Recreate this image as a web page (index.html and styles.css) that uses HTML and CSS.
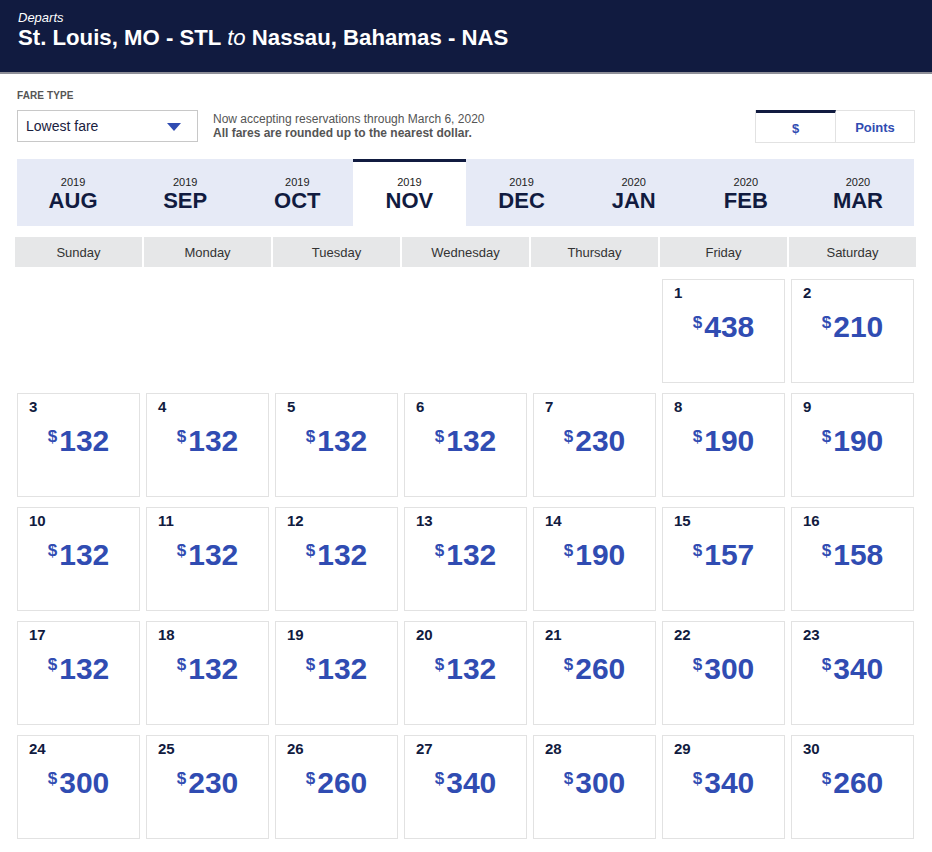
FILE: index.html
```html
<!DOCTYPE html>
<html>
<head>
<meta charset="utf-8">
<link rel="stylesheet" href="styles.css">
</head>
<body>
<header class="hero">
  <div class="departs">Departs</div>
  <h1 class="route">St. Louis, MO - STL <span class="to">to</span> Nassau, Bahamas - NAS</h1>
</header>

<section class="controls">
  <div class="label">FARE TYPE</div>
  <div class="control-row">
    <div class="select">
      <span>Lowest fare</span>
      <svg class="caret" width="14" height="8" viewBox="0 0 14 8"><path d="M0 0 H14 L7 8 Z" fill="#304cb2"/></svg>
    </div>
    <div class="note">
      <div>Now accepting reservations through March 6, 2020</div>
      <div class="note-bold">All fares are rounded up to the nearest dollar.</div>
    </div>
    <div class="toggle">
      <div class="toggle-btn active">$</div>
      <div class="toggle-btn">Points</div>
    </div>
  </div>
</section>

<nav class="months">
  <div class="month"><div class="yr">2019</div><div class="mo">AUG</div></div>
  <div class="month"><div class="yr">2019</div><div class="mo">SEP</div></div>
  <div class="month"><div class="yr">2019</div><div class="mo">OCT</div></div>
  <div class="month current"><div class="yr">2019</div><div class="mo">NOV</div></div>
  <div class="month"><div class="yr">2019</div><div class="mo">DEC</div></div>
  <div class="month"><div class="yr">2020</div><div class="mo">JAN</div></div>
  <div class="month"><div class="yr">2020</div><div class="mo">FEB</div></div>
  <div class="month"><div class="yr">2020</div><div class="mo">MAR</div></div>
</nav>

<div class="weekdays">
  <div class="wd">Sunday</div>
  <div class="wd">Monday</div>
  <div class="wd">Tuesday</div>
  <div class="wd">Wednesday</div>
  <div class="wd">Thursday</div>
  <div class="wd">Friday</div>
  <div class="wd">Saturday</div>
</div>

<div class="days">
  <div class="empty"></div><div class="empty"></div><div class="empty"></div><div class="empty"></div><div class="empty"></div>
  <div class="day"><div class="num">1</div><div class="price"><span class="cur">$</span>438</div></div>
  <div class="day"><div class="num">2</div><div class="price"><span class="cur">$</span>210</div></div>

  <div class="day"><div class="num">3</div><div class="price"><span class="cur">$</span>132</div></div>
  <div class="day"><div class="num">4</div><div class="price"><span class="cur">$</span>132</div></div>
  <div class="day"><div class="num">5</div><div class="price"><span class="cur">$</span>132</div></div>
  <div class="day"><div class="num">6</div><div class="price"><span class="cur">$</span>132</div></div>
  <div class="day"><div class="num">7</div><div class="price"><span class="cur">$</span>230</div></div>
  <div class="day"><div class="num">8</div><div class="price"><span class="cur">$</span>190</div></div>
  <div class="day"><div class="num">9</div><div class="price"><span class="cur">$</span>190</div></div>

  <div class="day"><div class="num">10</div><div class="price"><span class="cur">$</span>132</div></div>
  <div class="day"><div class="num">11</div><div class="price"><span class="cur">$</span>132</div></div>
  <div class="day"><div class="num">12</div><div class="price"><span class="cur">$</span>132</div></div>
  <div class="day"><div class="num">13</div><div class="price"><span class="cur">$</span>132</div></div>
  <div class="day"><div class="num">14</div><div class="price"><span class="cur">$</span>190</div></div>
  <div class="day"><div class="num">15</div><div class="price"><span class="cur">$</span>157</div></div>
  <div class="day"><div class="num">16</div><div class="price"><span class="cur">$</span>158</div></div>

  <div class="day"><div class="num">17</div><div class="price"><span class="cur">$</span>132</div></div>
  <div class="day"><div class="num">18</div><div class="price"><span class="cur">$</span>132</div></div>
  <div class="day"><div class="num">19</div><div class="price"><span class="cur">$</span>132</div></div>
  <div class="day"><div class="num">20</div><div class="price"><span class="cur">$</span>132</div></div>
  <div class="day"><div class="num">21</div><div class="price"><span class="cur">$</span>260</div></div>
  <div class="day"><div class="num">22</div><div class="price"><span class="cur">$</span>300</div></div>
  <div class="day"><div class="num">23</div><div class="price"><span class="cur">$</span>340</div></div>

  <div class="day"><div class="num">24</div><div class="price"><span class="cur">$</span>300</div></div>
  <div class="day"><div class="num">25</div><div class="price"><span class="cur">$</span>230</div></div>
  <div class="day"><div class="num">26</div><div class="price"><span class="cur">$</span>260</div></div>
  <div class="day"><div class="num">27</div><div class="price"><span class="cur">$</span>340</div></div>
  <div class="day"><div class="num">28</div><div class="price"><span class="cur">$</span>300</div></div>
  <div class="day"><div class="num">29</div><div class="price"><span class="cur">$</span>340</div></div>
  <div class="day"><div class="num">30</div><div class="price"><span class="cur">$</span>260</div></div>
</div>
</body>
</html>
```

FILE: styles.css
```css
* { box-sizing: border-box; }
html, body { margin: 0; padding: 0; background: #fff; }
body {
  font-family: "Liberation Sans", Arial, sans-serif;
  color: #111b40;
  width: 932px;
  overflow: hidden;
}

.hero {
  background: #111b40;
  height: 74px;
  padding: 11px 18px 0;
  border-bottom: 2px solid #8e8f98;
  color: #fff;
}
.departs {
  font-size: 13px;
  font-style: italic;
  line-height: 14px;
}
.route {
  margin: 0;
  font-size: 22.2px;
  line-height: 26px;
  font-weight: bold;
}
.route .to { font-style: italic; font-weight: normal; }

.controls {
  padding: 16px 17px 0 17px;
}
.label {
  font-size: 10px;
  font-weight: bold;
  color: #555;
  line-height: 12px;
  letter-spacing: 0.1px;
}
.control-row {
  display: flex;
  align-items: flex-start;
  margin-top: 8px;
}
.select {
  width: 181px;
  height: 32px;
  border: 1px solid #c8c8c8;
  display: flex;
  align-items: center;
  justify-content: space-between;
  padding: 0 16px 0 8px;
  font-size: 14px;
  color: #1a2140;
}
.caret { display: block; margin-top: 1px; }
.note {
  margin-left: 15px;
  margin-top: 2px;
  font-size: 12px;
  line-height: 14px;
  color: #555;
}
.note-bold { font-weight: bold; }
.toggle {
  margin-left: auto;
  display: flex;
  border: 1px solid #e2e2e2;
  height: 33px;
}
.toggle-btn {
  width: 78px;
  display: flex;
  align-items: center;
  justify-content: center;
  font-size: 13px;
  font-weight: bold;
  color: #304cb2;
  padding-top: 2px;
}
.toggle-btn.active {
  border-top: 3px solid #111b40;
  border-right: 1px solid #e2e2e2;
  margin-top: -1px;
  width: 80px;
}

.months {
  display: grid;
  grid-template-columns: repeat(8, 1fr);
  margin: 16px 18px 0 17px;
  background: #e6eaf6;
  height: 67px;
}
.month {
  border-top: 3px solid transparent;
  padding-top: 14px;
  text-align: center;
}
.month.current {
  background: #fff;
  border-top-color: #111b40;
}
.yr {
  font-size: 11px;
  line-height: 13px;
  color: #222;
}
.mo {
  font-size: 22px;
  line-height: 24px;
  font-weight: bold;
  color: #111b40;
}

.weekdays {
  display: grid;
  grid-template-columns: repeat(7, 127px);
  column-gap: 2px;
  margin: 11px 0 0 15px;
}
.wd {
  background: #e6e7e8;
  height: 30px;
  display: flex;
  align-items: center;
  justify-content: center;
  font-size: 13px;
  color: #333;
}

.days {
  display: grid;
  grid-template-columns: repeat(7, 127px);
  grid-auto-rows: 104px;
  column-gap: 2px;
  row-gap: 10px;
  margin: 12px 0 0 15px;
}
.day {
  margin: 0 2px;
  border: 1px solid #e2e2e2;
  padding: 4px 11px 0;
}
.num {
  font-size: 15px;
  line-height: 18px;
  font-weight: bold;
  color: #111b40;
}
.price {
  margin-top: 10px;
  display: flex;
  justify-content: center;
  align-items: flex-start;
  font-size: 30px;
  line-height: 30px;
  font-weight: bold;
  color: #304cb2;
}
.cur {
  font-size: 17px;
  line-height: 17px;
  margin-top: 2px;
  margin-right: 2px;
}
```
